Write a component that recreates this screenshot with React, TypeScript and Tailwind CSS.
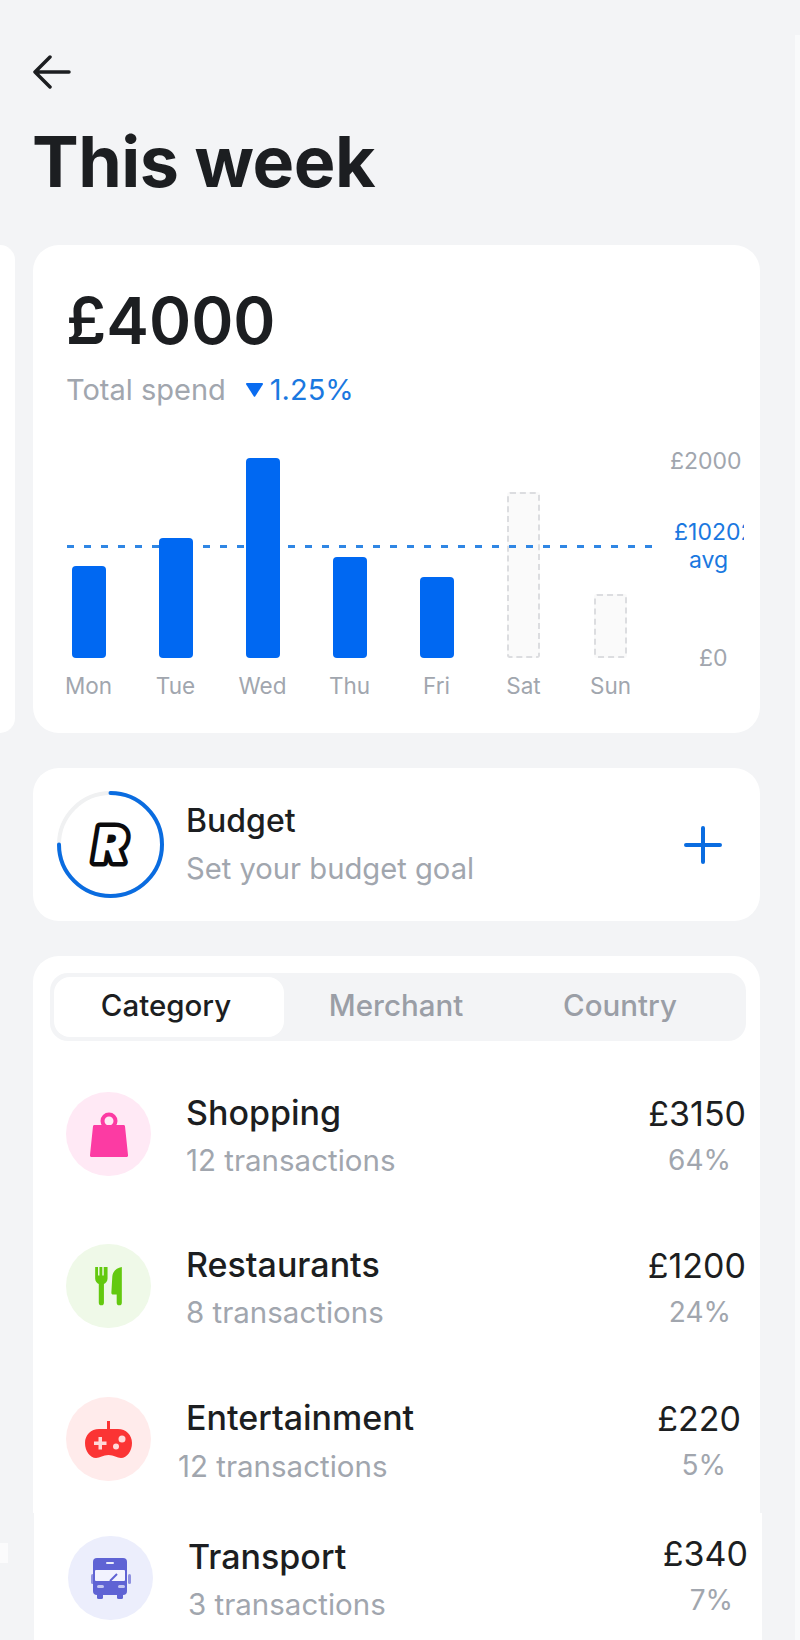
import React from 'react';

const bars = [
  { day: 'Mon', height: 'h-[92px]', future: false },
  { day: 'Tue', height: 'h-[120px]', future: false },
  { day: 'Wed', height: 'h-[200px]', future: false },
  { day: 'Thu', height: 'h-[101px]', future: false },
  { day: 'Fri', height: 'h-[81px]', future: false },
  { day: 'Sat', height: 'h-[166px]', future: true },
  { day: 'Sun', height: 'h-[64px]', future: true },
];

function BagIcon() {
  return (
    <svg width="38" height="45" viewBox="0 0 38 45" fill="none">
      <circle cx="19" cy="9" r="6.500" stroke="#fc3ba3" strokeWidth="4" />
      <path d="M4.500 13h29a1.500 1.500 0 0 1 1.500 1.300L38 43a1.700 1.700 0 0 1-1.700 2H1.700A1.700 1.700 0 0 1 0 43L3 14.300A1.500 1.500 0 0 1 4.500 13z" fill="#fc3ba3" />
    </svg>
  );
}

function CutleryIcon() {
  return (
    <svg width="29" height="40" viewBox="0 0 30 42" fill="#63c90f">
      <path d="M1 1h3v9h1.500V1h3v9H10V1h4v12c0 3-2 5-3.800 6v19.500a2.700 2.700 0 0 1-5.400 0V19C3 18 1 16 1 13z" />
      <path d="M29 1v37.500a2.700 2.700 0 0 1-5.400 0V30H20c-1.500 0-2-1-2-2l1-17c.3-5 4-9 10-10z" />
    </svg>
  );
}

function GamepadIcon() {
  return (
    <svg width="47" height="37" viewBox="0 0 47 37" fill="none">
      <path d="M22 0h3v10h-3z" fill="#fb3434" />
      <path d="M14 8h19c8 0 14 6 14 14 0 8-5 15-11 15-4 0-7-3-12.500-3S15 37 11 37C5 37 0 30 0 22 0 14 6 8 14 8z" fill="#fb3434" />
      <path d="M13.500 16h3.500v4.500h4.500v3.500H17v4.500h-3.500V24H9v-3.500h4.500z" fill="#ffd9d9" />
      <circle cx="37" cy="18" r="3.500" fill="#ffd9d9" />
      <circle cx="31" cy="25.500" r="3" fill="#ffd9d9" />
    </svg>
  );
}

function BusIcon() {
  return (
    <svg width="40" height="41" viewBox="0 0 40 41" fill="none">
      <rect x="0" y="16" width="3" height="10" rx="1.500" fill="#8f92e0" />
      <rect x="37" y="16" width="3" height="10" rx="1.500" fill="#8f92e0" />
      <rect x="6" y="33" width="6" height="8" rx="1.500" fill="#5f63d4" />
      <rect x="26" y="33" width="6" height="8" rx="1.500" fill="#5f63d4" />
      <rect x="2" y="0" width="34" height="37" rx="4" fill="#5f63d4" />
      <rect x="4" y="12" width="30" height="11" rx="1" fill="#f2f3fe" />
      <rect x="15" y="4" width="8" height="2" rx="1" fill="#eceefc" />
      <path d="M19 23l7-7" stroke="#5f63d4" strokeWidth="2" />
      <rect x="6" y="27" width="7" height="3" rx="1.500" fill="#c5c7f1" />
      <rect x="27" y="27" width="7" height="3" rx="1.500" fill="#c5c7f1" />
    </svg>
  );
}

interface RowProps {
  icon: React.ReactNode;
  circle: string;
  title: string;
  sub: string;
  amount: string;
  percent: string;
  subClass?: string;
  amountClass?: string;
}

function Row({ icon, circle, title, sub, amount, percent, subClass = '', amountClass = '' }: RowProps) {
  return (
    <div className="flex items-center h-[84px]">
      <div className={`w-[85px] h-[84px] rounded-full flex items-center justify-center shrink-0 ${circle}`}>{icon}</div>
      <div className="ml-[35px] flex-1 pt-[5px]">
        <div className="text-[34px] leading-[40px] font-medium text-[#1c1e21]">{title}</div>
        <div className={`text-[29.500px] leading-[40px] mt-[7px] text-[#a1a6ae] ${subClass}`}>{sub}</div>
      </div>
      <div className={`text-right pt-[6px] ${amountClass}`}>
        <div className="text-[34px] leading-[40px] text-[#1c1e21]">{amount}</div>
        <div className="text-[28px] leading-[40px] mt-[6px] pr-[15px] text-[#a1a6ae]">{percent}</div>
      </div>
    </div>
  );
}

export default function App() {
  return (
    <div className="relative w-[800px] h-[1640px] overflow-hidden bg-[#f3f4f6] font-['Inter',sans-serif]">
      {/* Header */}
      <div className="pl-[33px] pt-[55px]">
        <svg width="38" height="34" viewBox="0 0 38 34" fill="none" stroke="#1c1e21" strokeWidth="3.500" strokeLinecap="round" strokeLinejoin="round">
          <path d="M36 17H3M17 2 2 17l15 15" />
        </svg>
        <h1 className="mt-[33px] -ml-[1px] text-[70px] leading-[80px] font-bold tracking-[-0.5px] text-[#1c1e21]">This week</h1>
      </div>

      {/* Spend card, with the edge of the previous one */}
      <div className="flex mt-[43px] gap-[18px]">
        <div className="w-[15px] h-[488px] bg-white rounded-r-[20px]" />
        <div className="w-[727px] h-[488px] bg-white rounded-[26px] relative">
          <div className="pl-[33px] pt-[40px]">
            <div className="text-[64px] leading-[72px] font-semibold text-[#1c1e21]">£4000</div>
            <div className="flex items-center mt-[15px] text-[29px] leading-[36px]">
              <span className="text-[#a1a6ae]">Total spend</span>
              <svg className="ml-[20px]" width="17" height="14" viewBox="0 0 17 14">
                <path d="M1 0h15a1 1 0 0 1 .8 1.500L9.300 13.300a1 1 0 0 1-1.600 0L.2 1.500A1 1 0 0 1 1 0z" fill="#0a6cf0" />
              </svg>
              <span className="ml-[7px] text-[#1a78e0]">1.25%</span>
            </div>
          </div>
          <div className="flex mt-[50px] pl-[12px]">
            <div className="relative flex">
              <svg className="absolute left-[22px] top-[87px] z-[5]" width="592" height="3">
                <line x1="0" y1="1.500" x2="592" y2="1.500" stroke="#2f86e4" strokeWidth="3" strokeDasharray="7 10" />
              </svg>
              {bars.map((bar) => (
                <div key={bar.day} className="w-[87px] h-[243px] flex flex-col items-center">
                  <div className="h-[200px] flex items-end">
                    {bar.future ? (
                      <div className={`w-[33px] ${bar.height} rounded-[3px] bg-[#fafafa] border-2 border-dashed border-[#dcdde0]`} />
                    ) : (
                      <div className={`relative z-10 w-[34px] ${bar.height} rounded-[4px] bg-[#0068f2]`} />
                    )}
                  </div>
                  <div className="mt-[14px] text-[22.500px] leading-[28px] text-[#a1a6ae]">{bar.day}</div>
                </div>
              ))}
            </div>
            <div className="w-[90px] h-[240px] -mt-[11px] overflow-hidden whitespace-nowrap flex flex-col text-[23px] leading-[28px] text-[#a1a6ae]">
              <div className="pl-[16px]">£2000</div>
              <div className="pl-[20px] mt-[43px] text-[#1a78e0]">£10202</div>
              <div className="pl-[35px] text-[#1a78e0]">avg</div>
              <div className="pl-[45px] mt-[70px]">£0</div>
            </div>
          </div>
        </div>
      </div>

      {/* Budget card */}
      <div className="ml-[33px] mt-[35px] w-[727px] h-[153px] bg-white rounded-[26px] flex items-center pl-[24px]">
        <svg className="shrink-0" width="107" height="107" viewBox="0 0 107 107" fill="none">
          <circle cx="53.500" cy="53.500" r="51.500" stroke="#f0f1f2" strokeWidth="4" />
          <path d="M53.500 2a51.500 51.500 0 1 1-51.500 51.500" stroke="#0a6ce0" strokeWidth="4" strokeLinecap="round" />
          <text x="53" y="71" textAnchor="middle" fontSize="48" fontWeight="900" fontStyle="italic" fill="#ffffff" stroke="#0b0b0d" strokeWidth="9" strokeLinejoin="round" paintOrder="stroke">R</text>
        </svg>
        <div className="ml-[22px] flex-1">
          <div className="text-[32px] leading-[36px] font-medium text-[#1c1e21]">Budget</div>
          <div className="mt-[12px] text-[29.200px] leading-[36px] text-[#a1a6ae]">Set your budget goal</div>
        </div>
        <svg className="mr-[38px]" width="38" height="38" viewBox="0 0 38 38" fill="none" stroke="#0a6ce0" strokeWidth="4" strokeLinecap="round">
          <path d="M19 2v34M2 19h34" />
        </svg>
      </div>

      {/* Breakdown card */}
      <div className="ml-[33px] mt-[35px] w-[727px] h-[557px] bg-white rounded-t-[26px] px-[17px] pt-[17px]">
        <div className="w-[696px] h-[68px] rounded-[18px] bg-[#f3f4f6] flex p-[4px] text-[29.500px] font-medium text-[#9a9ea6]">
          <div className="w-[230px] rounded-[16px] bg-white flex items-center justify-center text-[#1c1e21] pb-[4px] pr-[6px]">Category</div>
          <div className="w-[228px] flex items-center justify-center pb-[4px] pr-[4px]">Merchant</div>
          <div className="flex-1 flex items-center justify-center -ml-[6px] pb-[4px] pr-[8px]">Country</div>
        </div>
        <div className="mt-[51px] pl-[16px] -mr-[3px] flex flex-col">
          <Row icon={<BagIcon />} circle="bg-[#ffe9f5]" title="Shopping" sub="12 transactions" amount="£3150" percent="64%" />
          <div className="h-[68px]" />
          <Row icon={<CutleryIcon />} circle="bg-[#eff9e8]" title="Restaurants" sub="8 transactions" amount="£1200" percent="24%" />
          <div className="h-[69px]" />
          <Row icon={<GamepadIcon />} circle="bg-[#ffebeb]" title="Entertainment" sub="12 transactions" amount="£220" percent="5%" subClass="-ml-[8px] pt-[1px]" amountClass="pr-[5px]" />
        </div>
      </div>

      {/* Transport sits on its own sheet, a little off the one above */}
      <div className="ml-[34px] w-[728px] h-[160px] bg-white pl-[34px] pt-[23px] pr-[14px]">
        <Row icon={<BusIcon />} circle="bg-[#eceefc]" title="Transport" sub="3 transactions" amount="£340" percent="7%" amountClass="-mt-[8px]" />
      </div>

      {/* slivers of the sheets around this screen */}
      <div className="absolute left-0 top-[1543px] w-[8px] h-[20px] bg-[#fbfbfc]" />
      <div className="absolute right-0 top-[35px] bottom-0 w-[5px] bg-[#f9fafb]" />
    </div>
  );
}
